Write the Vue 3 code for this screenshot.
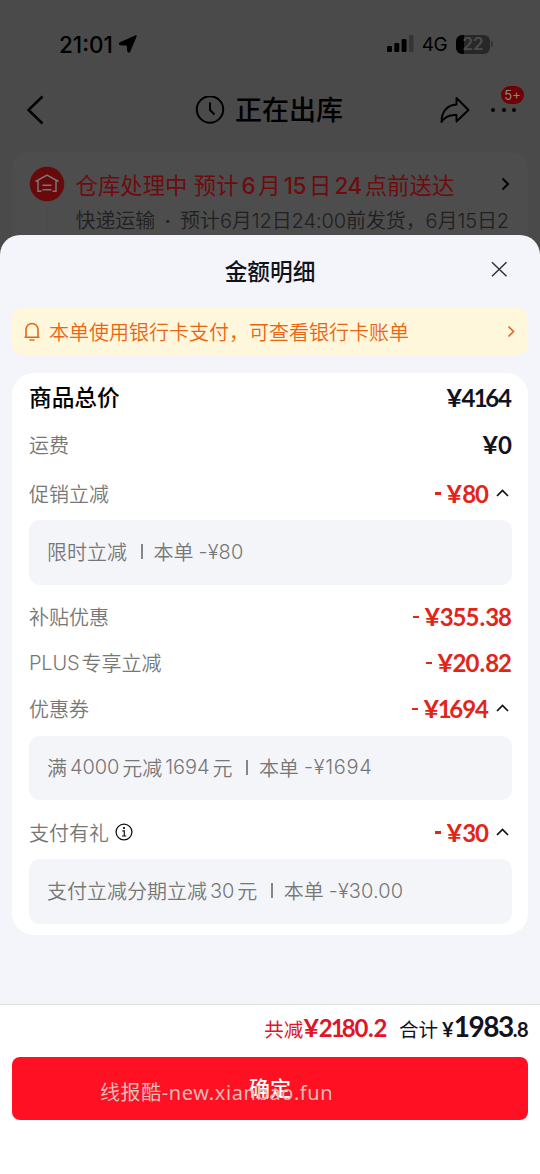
<script setup>
const rows = [
  { label: '商品总价', price: '¥4164', strong: true },
  { label: '运费', price: '¥0' },
  { label: '促销立减', minus: true, price: '¥80', open: true, detail: ['限时立减'], amount: '-¥80' },
  { label: '补贴优惠', minus: true, price: '¥355.38' },
  { latin: 'PLUS', label: '专享立减', minus: true, price: '¥20.82' },
  { label: '优惠券', minus: true, price: '¥1694', open: true, detail: ['满', '4000', '元减', '1694', '元'], amount: '-¥1694' },
  { label: '支付有礼', info: true, minus: true, price: '¥30', open: true, detail: ['支付立减分期立减', '30', '元'], amount: '-¥30.00' }
]
const glyphClass = { '¥': 'g-yen', '1': 'g-one', '.': 'g-dot' }
const pieces = (text) => text.split(/([¥1.])/).filter(Boolean)
</script>

<template>
  <div class="screen">
    <div class="page">
      <div class="status">
        <div class="clock">
          <span>21:01</span>
          <svg width="18" height="18" viewBox="0 0 18 18"><path d="M17 1 10.500 16.500q-1 1.200-1.500-.4L8.500 10 1.200 9.500q-1.300-.6 0-1.500Z" stroke="#000" stroke-width="1.500" stroke-linejoin="round" /></svg>
        </div>
        <div class="signals">
          <svg width="27" height="18" viewBox="0 0 27 18">
            <rect x="0" y="11" width="5" height="6" rx="1.300" />
            <rect x="7.300" y="8" width="5" height="9" rx="1.300" />
            <rect x="14.600" y="4" width="5" height="13" rx="1.300" />
            <rect x="22" y="0" width="4.500" height="17" rx="1.300" fill="#353535" />
          </svg>
          <span class="net">4G</span>
          <span class="battery"><b>22</b></span>
          <i class="nub"></i>
        </div>
      </div>
      <div class="nav">
        <svg class="back" width="18" height="30" viewBox="0 0 18 30"><path d="M16.500 1.500 2.500 15l14 13.500" fill="none" stroke="#000" stroke-width="2.500" /></svg>
        <div class="nav-title">
          <svg width="30" height="30" viewBox="0 0 30 30" fill="none" stroke="#000" stroke-width="2"><circle cx="15" cy="13.500" r="13.200" /><path d="M15 6.500V14l4.500 4.500" /></svg>
          <span>正在出库</span>
        </div>
        <div class="nav-tools">
          <svg width="30" height="28" viewBox="0 0 30 28" fill="none" stroke="#000" stroke-width="1.900" stroke-linejoin="round"><path d="M16.500 2v6.500C7.500 9 1.500 15 1.500 26c3.500-6 8-7.500 15-7v6.500L28.500 14Z" /></svg>
          <div class="more"><i></i><i></i><i></i><span class="badge">5+</span></div>
        </div>
      </div>
      <div class="order">
        <div class="rail">
          <svg width="36" height="36" viewBox="0 0 36 36"><circle cx="18" cy="18" r="17.300" fill="#680a0c" /><g fill="none" stroke="#777" stroke-width="1.500"><path d="m6.500 15.500 11.500-6.300 11.500 6.300M9 14.500v10.800h3.500M27 14.500v10.800h-3.500M13.500 19.300h9M13.500 23.800h9" /></g></svg>
          <i></i>
        </div>
        <div class="order-text">
          <div class="order-head">
            <p>仓库处理中&nbsp;预计<b>6</b>月<b>15</b>日<b>24</b>点前送达</p>
            <svg width="9" height="14" viewBox="0 0 9 14"><path d="m1.500 1.500 5.500 5.500-5.500 5.500" fill="none" stroke="#000" stroke-width="2" /></svg>
          </div>
          <p class="order-sub">快递运输<em>·</em>预计6月12日24:00前发货，6月15日2</p>
        </div>
      </div>
    </div>

    <div class="sheet">
      <div class="sheet-head">
        <h2>金额明细</h2>
        <svg class="close" width="17" height="17" viewBox="0 0 17 17"><path d="m1 1.200 14.500 14M15.500 1.200 1 15.200" stroke="#333" stroke-width="1.500" /></svg>
      </div>
      <div class="notice">
        <svg width="18" height="19" viewBox="0 0 18 19" fill="none" stroke="#ea6513" stroke-width="1.600"><path d="M3 15V7.500a6 6 0 0 1 12 0V15M1.500 15.200h15M6.500 18h5" /></svg>
        <span>本单使用银行卡支付，可查看银行卡账单</span>
        <svg class="go" width="8" height="13" viewBox="0 0 8 13"><path d="m1.500 1.500 5 5-5 5" fill="none" stroke="#e4681f" stroke-width="1.600" /></svg>
      </div>
      <div class="card">
        <template v-for="row in rows" :key="row.label">
          <div class="row" :class="{ strong: row.strong }">
            <div class="label">
              <span v-if="row.latin" class="latin">{{ row.latin }}</span><span>{{ row.label }}</span>
              <svg v-if="row.info" width="18" height="18" viewBox="0 0 18 18"><circle cx="9" cy="9" r="7.900" fill="none" stroke="#111" stroke-width="1.300" /><circle cx="9" cy="5" r="1.100" /><path d="M7.300 7.800H9.300V13M7 13h4.300" fill="none" stroke="#111" stroke-width="1.200" /></svg>
            </div>
            <div class="price" :class="{ red: row.minus }">
              <i v-if="row.minus"></i><div class="digits"><span v-for="(piece, i) in pieces(row.price)" :key="i" :class="glyphClass[piece]">{{ piece }}</span></div>
              <svg v-if="row.open" width="13" height="9" viewBox="0 0 13 9"><path d="m1 7 5.500-5.500L12 7" fill="none" stroke="#111" stroke-width="1.700" /></svg>
            </div>
          </div>
          <div v-if="row.detail" class="detail">
            <span v-for="(part, i) in row.detail" :key="i" :class="{ num: i % 2 }">{{ part }}</span>
            <i></i><span>本单</span><span class="amount" :class="{ wide: row.amount === '-¥1694' }">{{ row.amount }}</span>
          </div>
        </template>
      </div>
      <div class="footer">
        <div class="totals">
          <span class="saved">共减</span><div class="saved-price"><span v-for="(piece, i) in pieces('¥2180.2')" :key="i" :class="glyphClass[piece]">{{ piece }}</span></div>
          <span class="sum">合计</span><span class="yen">¥</span><span class="big">1983</span><span class="dec">.8</span>
        </div>
        <button class="ok">确定<span class="mark">线报酷-new.xianbao.fun</span></button>
      </div>
    </div>
  </div>
</template>

<style>
body { margin: 0; background: #4a4a4a; }
</style>

<style scoped>
.screen { width: 540px; height: 1174px; display: flex; flex-direction: column; overflow: hidden; background: #4a4a4a; font-family: Inter, "Noto Sans CJK SC", sans-serif; color: #000; }
.screen * { box-sizing: border-box; }
svg { display: block; flex: none; }
p, h2 { margin: 0; }
.page { height: 235px; flex: none; }
.status { height: 88px; padding: 0 47px 0 59px; display: flex; align-items: center; justify-content: space-between; }
.clock { display: flex; align-items: center; gap: 6px; font-size: 22.500px; font-weight: 500; letter-spacing: 0; }
.signals { display: flex; align-items: center; }
.net { margin: 0 9px 0 8px; font-size: 19px; letter-spacing: -.6px; }
.battery { width: 34px; height: 19px; border-radius: 6px; background: linear-gradient(90deg, #000 8px, #282828 8px); color: #4c4c4c; font-size: 17px; line-height: 19px; text-align: center; }
.battery b { font-weight: 600; }
.nub { width: 2px; height: 6px; margin-left: 1px; border-radius: 0 2px 2px 0; background: #353535; }
.nav { height: 64px; padding: 0 24px 20px 26px; display: grid; grid-template-columns: 100px 1fr 100px; align-items: center; }
.nav-title { display: flex; align-items: center; justify-content: center; gap: 10px; padding-right: 4px; padding-top: 1px; font-size: 27px; line-height: 40px; font-weight: 500; }
.nav-tools { display: flex; align-items: center; justify-content: flex-end; gap: 21px; }
.more { position: relative; width: 25px; display: flex; justify-content: space-between; }
.more i { width: 4px; height: 4px; border-radius: 50%; background: #000; }
.badge { position: absolute; left: 10px; top: -22px; width: 23px; height: 18px; border-radius: 9px; background: #700006; color: #888; font-size: 13px; line-height: 18px; text-align: center; }
.order { height: 100px; margin: 0 12px; padding: 14px 18px 0 17px; border-radius: 16px 16px 0 0; background: #4d4d4d; display: flex; }
.rail { width: 36px; margin-right: 10.500px; display: flex; flex-direction: column; align-items: center; }
.rail i { width: 1px; height: 40px; margin-top: 6px; background: #643e40; }
.order-text { flex: 1; min-width: 0; }
.order-head { height: 35px; display: flex; align-items: center; justify-content: space-between; color: #700b0d; font-size: 22.400px; font-weight: 400; white-space: nowrap; }
.order-head b { font-weight: 500; margin: 0 3px; letter-spacing: -.4px; }
.order-sub { height: 41px; line-height: 41px; font-size: 20px; color: #202020; white-space: nowrap; letter-spacing: -.1px; font-weight: 350; }
.order-sub em { display: inline-block; width: 25px; text-align: center; font-style: normal; font-weight: 600; }
.sheet { flex: 1; display: flex; flex-direction: column; border-radius: 20px 20px 0 0; background: #f4f5fa; overflow: hidden; }
.sheet-head { position: relative; height: 73px; display: flex; align-items: center; justify-content: center; }
h2 { font-size: 22.700px; line-height: 34px; font-weight: 500; color: #11131a; }
.close { position: absolute; right: 32px; top: 26px; }
.notice { height: 47px; margin: 0 12px; padding: 0 13px 0 11px; display: flex; align-items: center; border-radius: 10px; background: #fff7dc; color: #ea6513; font-size: 20px; line-height: 46px; font-weight: 350; }
.notice span { margin-left: 8px; padding-top: 2px; }
.notice .go { margin-left: auto; }
.card { margin: 18px 12px 0; padding: 1px 16px 0 17px; border-radius: 22px; background: #fff; height: 562px; flex: none; }
.row { height: 46px; padding-bottom: 2px; display: flex; align-items: center; justify-content: space-between; font-size: 20px; color: #777; font-weight: 350; }
.row:nth-child(2) { margin-top: 1px; padding-bottom: 0; }
.row:nth-child(3) { margin-top: 4px; }
.row.strong { padding-bottom: 0; color: #000; font-size: 22.700px; font-weight: 500; }
.row.strong .label { padding-bottom: 1px; }
.row.strong .price { padding-top: 1px; }
.detail + .row { margin-top: 10px; }
.label, .price { display: flex; align-items: center; }
.latin { margin-right: 2px; letter-spacing: -.2px; }
.label svg { margin-left: 6px; }
.price { color: #11131f; font-family: Lato, sans-serif; font-size: 24px; font-weight: 700; letter-spacing: -1px; padding-right: 2px; }
.digits { display: flex; margin-right: -1px; }
.g-yen { margin-right: 1px; transform: scaleX(1.120); transform-origin: right; margin-left: 2px; }
.g-one { margin-left: -.8px; margin-right: -1.500px; }
.g-dot { margin: 0 1px; }
.price.red { color: #e1251b; }
.price i { width: 6px; height: 2.500px; margin: 1px 5px 0 0; background: #e1251b; }
.price svg { margin-left: 9px; margin-right: 1px; }
.detail { height: 64.500px; margin-top: 3px; padding: 0 18px 1px; display: flex; align-items: center; border-radius: 11px; background: #f4f5f9; font-size: 20px; color: #777; font-weight: 350; white-space: nowrap; }
.num { margin: 0 3px; letter-spacing: -.1px; }
.detail i { width: 1.500px; height: 15px; margin: 0 11px 0 14px; background: #858585; }
.amount { margin-left: 5px; letter-spacing: .1px; }
.amount.wide { letter-spacing: .7px; }
.footer { height: 170px; margin-top: auto; border-top: 1px solid #dfe1e2; background: #fff; padding: 0 12px; }
.totals { height: 52px; padding-top: 5px; display: flex; justify-content: flex-end; align-items: baseline; font-size: 19.500px; line-height: 32px; color: #11131f; }
.saved { color: #e0152a; }
.saved-price, .yen, .big, .dec { font-family: Lato, sans-serif; font-weight: 700; }
.saved-price { display: flex; color: #e0152a; font-size: 24px; letter-spacing: -1.300px; margin-right: 13px; }
.yen { font-size: 20px; margin-left: 4px; }
.big { font-size: 28px; letter-spacing: -1.500px; }
.dec { font-size: 20px; letter-spacing: -.5px; }
.ok { position: relative; display: block; width: 516px; height: 63px; padding: 0; border: 0; border-radius: 8px; background: #ff1022; color: #fff; font-family: inherit; font-size: 21px; line-height: 62px; font-weight: 500; text-align: center; }
.mark { position: absolute; left: 88px; top: 5px; color: #dfbdb8; font-family: "Noto Sans", "Noto Sans CJK SC", sans-serif; font-size: 20px; font-weight: 400; letter-spacing: .6px; white-space: nowrap; }
</style>
